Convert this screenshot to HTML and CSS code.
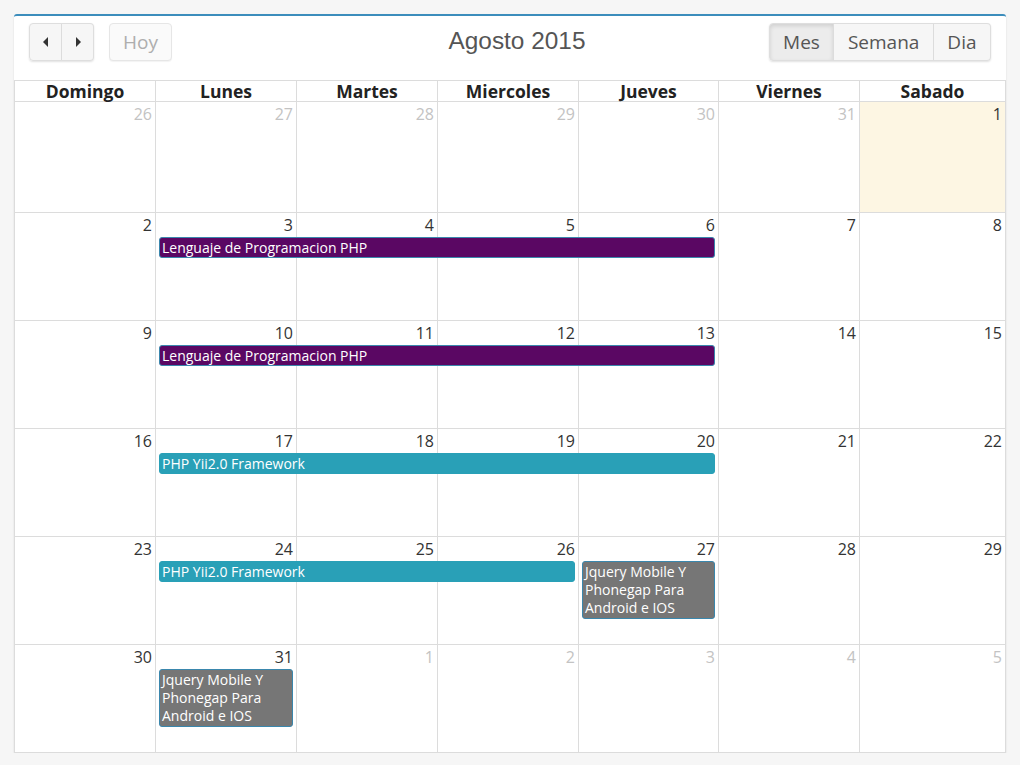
FILE: index.html
```html
<!DOCTYPE html>
<html lang="es">
<head>
<meta charset="utf-8">
<title>Calendario</title>
<link rel="stylesheet" href="styles.css">
</head>
<body>
<div class="card">
  <div class="toolbar">
    <div class="left">
      <div class="btn-group">
        <button class="btn btn-icon" aria-label="prev"><svg width="8" height="10" viewBox="0 0 8 10"><path d="M6 0 L1 5 L6 10 Z" fill="#333"/></svg></button>
        <button class="btn btn-icon" aria-label="next"><svg width="8" height="10" viewBox="0 0 8 10"><path d="M2 0 L7 5 L2 10 Z" fill="#333"/></svg></button>
      </div>
      <button class="btn btn-solo disabled">Hoy</button>
    </div>
    <h2 class="title">Agosto 2015</h2>
    <div class="right">
      <div class="btn-group">
        <button class="btn active">Mes</button>
        <button class="btn">Semana</button>
        <button class="btn">Dia</button>
      </div>
    </div>
  </div>

  <div class="cal">
    <div class="head">
      <div class="hcell">Domingo</div>
      <div class="hcell">Lunes</div>
      <div class="hcell">Martes</div>
      <div class="hcell">Miercoles</div>
      <div class="hcell">Jueves</div>
      <div class="hcell">Viernes</div>
      <div class="hcell">Sabado</div>
    </div>

    <div class="week first">
      <div class="day other c1">26</div>
      <div class="day other c2">27</div>
      <div class="day other c3">28</div>
      <div class="day other c4">29</div>
      <div class="day other c5">30</div>
      <div class="day other c6">31</div>
      <div class="day today c7">1</div>
    </div>

    <div class="week">
      <div class="day c1">2</div>
      <div class="day c2">3</div>
      <div class="day c3">4</div>
      <div class="day c4">5</div>
      <div class="day c5">6</div>
      <div class="day c6">7</div>
      <div class="day c7">8</div>
      <div class="event purple span-2-6">Lenguaje de Programacion PHP</div>
    </div>

    <div class="week">
      <div class="day c1">9</div>
      <div class="day c2">10</div>
      <div class="day c3">11</div>
      <div class="day c4">12</div>
      <div class="day c5">13</div>
      <div class="day c6">14</div>
      <div class="day c7">15</div>
      <div class="event purple span-2-6">Lenguaje de Programacion PHP</div>
    </div>

    <div class="week">
      <div class="day c1">16</div>
      <div class="day c2">17</div>
      <div class="day c3">18</div>
      <div class="day c4">19</div>
      <div class="day c5">20</div>
      <div class="day c6">21</div>
      <div class="day c7">22</div>
      <div class="event teal span-2-6">PHP Yii2.0 Framework</div>
    </div>

    <div class="week">
      <div class="day c1">23</div>
      <div class="day c2">24</div>
      <div class="day c3">25</div>
      <div class="day c4">26</div>
      <div class="day c5">27</div>
      <div class="day c6">28</div>
      <div class="day c7">29</div>
      <div class="event teal span-2-5">PHP Yii2.0 Framework</div>
      <div class="event gray span-5-6">Jquery Mobile Y Phonegap Para Android e IOS</div>
    </div>

    <div class="week">
      <div class="day c1">30</div>
      <div class="day c2">31</div>
      <div class="day other c3">1</div>
      <div class="day other c4">2</div>
      <div class="day other c5">3</div>
      <div class="day other c6">4</div>
      <div class="day other c7">5</div>
      <div class="event gray span-2-3">Jquery Mobile Y Phonegap Para Android e IOS</div>
    </div>
  </div>
</div>
</body>
</html>
```

FILE: styles.css
```css
* { box-sizing: border-box; }

body {
  margin: 0;
  background: #f6f6f6;
  font-family: "Open Sans", "Noto Sans", sans-serif;
  color: #333;
}

.card {
  margin: 14px 0 0 14px;
  width: 992px;
  background: #fff;
  border-top: 2px solid #3c8dbc;
  border-radius: 3px 3px 0 0;
  box-shadow: 0 1px 2px rgba(0, 0, 0, 0.12);
}

.toolbar {
  height: 64px;
  padding: 7px 15px 0 15px;
  display: flex;
  align-items: flex-start;
  justify-content: space-between;
}

.left, .right {
  display: flex;
  gap: 15px;
  width: 224px;
}

.right { justify-content: flex-end; }

.title {
  margin: 4px 0 0 14px;
  font-family: "Liberation Sans", Arial, sans-serif;
  font-weight: normal;
  font-size: 24.4px;
  line-height: 28px;
  color: #555;
}

.btn-group {
  display: flex;
  border-radius: 4px;
  box-shadow: 0 1px 2px rgba(0, 0, 0, 0.12);
}

.btn {
  height: 38px;
  padding: 0 13px;
  font-family: "Open Sans", "Noto Sans", sans-serif;
  font-size: 19px;
  color: #555;
  background: #f6f6f6;
  border: 1px solid #dedede;
  margin: 0;
  cursor: pointer;
}

.right .btn { padding: 0 13.5px; }

.btn-group .btn { border-radius: 0; }
.btn-group .btn + .btn { border-left: 1px solid #dcdcdc; margin-left: -1px; }
.btn-group .btn:first-child { border-radius: 4px 0 0 4px; }
.btn-group .btn:last-child { border-radius: 0 4px 4px 0; }

.btn-icon {
  width: 33px;
  padding: 0;
  display: flex;
  align-items: center;
  justify-content: center;
}

.btn-solo {
  border-radius: 4px;
  padding: 0 13px;
  box-shadow: 0 1px 1px rgba(0, 0, 0, 0.05);
  background: #fafafa;
  border-color: #e6e6e6;
}

.disabled { color: #aeaeae; }

.active {
  background: #ececec;
  box-shadow: inset 0 2px 4px rgba(0, 0, 0, 0.12);
}

.cal {
  display: grid;
  row-gap: 1px;
  padding: 1px;
  background: #dcdcdc;
}

.head, .week {
  display: grid;
  grid-template-columns: 140px 140px 140px 140px 139px 140px 145px;
  column-gap: 1px;
  background: #dcdcdc;
}

.hcell {
  background: #fff;
  height: 20px;
  text-align: center;
  font-weight: bold;
  font-size: 17.5px;
  line-height: 21px;
  color: #222;
}

.week {
  height: 107px;
  grid-template-rows: 24px auto 1fr;
}

.week.first { height: 110px; }

.day {
  grid-row: 1 / 4;
  background: #fff;
  text-align: right;
  padding: 2px 3px 0 0;
  font-size: 16px;
  line-height: 20px;
  color: #333;
}

.day.other { color: #c3c3c3; }
.day.today { background: #fdf6e3; }

.c1 { grid-column: 1; }
.c2 { grid-column: 2; }
.c3 { grid-column: 3; }
.c4 { grid-column: 4; }
.c5 { grid-column: 5; }
.c6 { grid-column: 6; }
.c7 { grid-column: 7; }

.span-2-6 { grid-column: 2 / 6; }
.span-2-5 { grid-column: 2 / 5; }
.span-2-3 { grid-column: 2 / 3; }
.span-5-6 { grid-column: 5 / 6; }

.event {
  grid-row: 2;
  align-self: start;
  margin: 0 3px 0 3px;
  border: 1px solid #3a87ad;
  border-radius: 3px;
  padding: 0 2px;
  font-size: 14px;
  line-height: 19px;
  color: #fff;
}

.purple { background: #5a0763; }
.teal { background: #29a0b7; border-color: #29a0b7; }
.gray { background: #767676; padding: 1px 2px 1px 2px; line-height: 18px; }
```
